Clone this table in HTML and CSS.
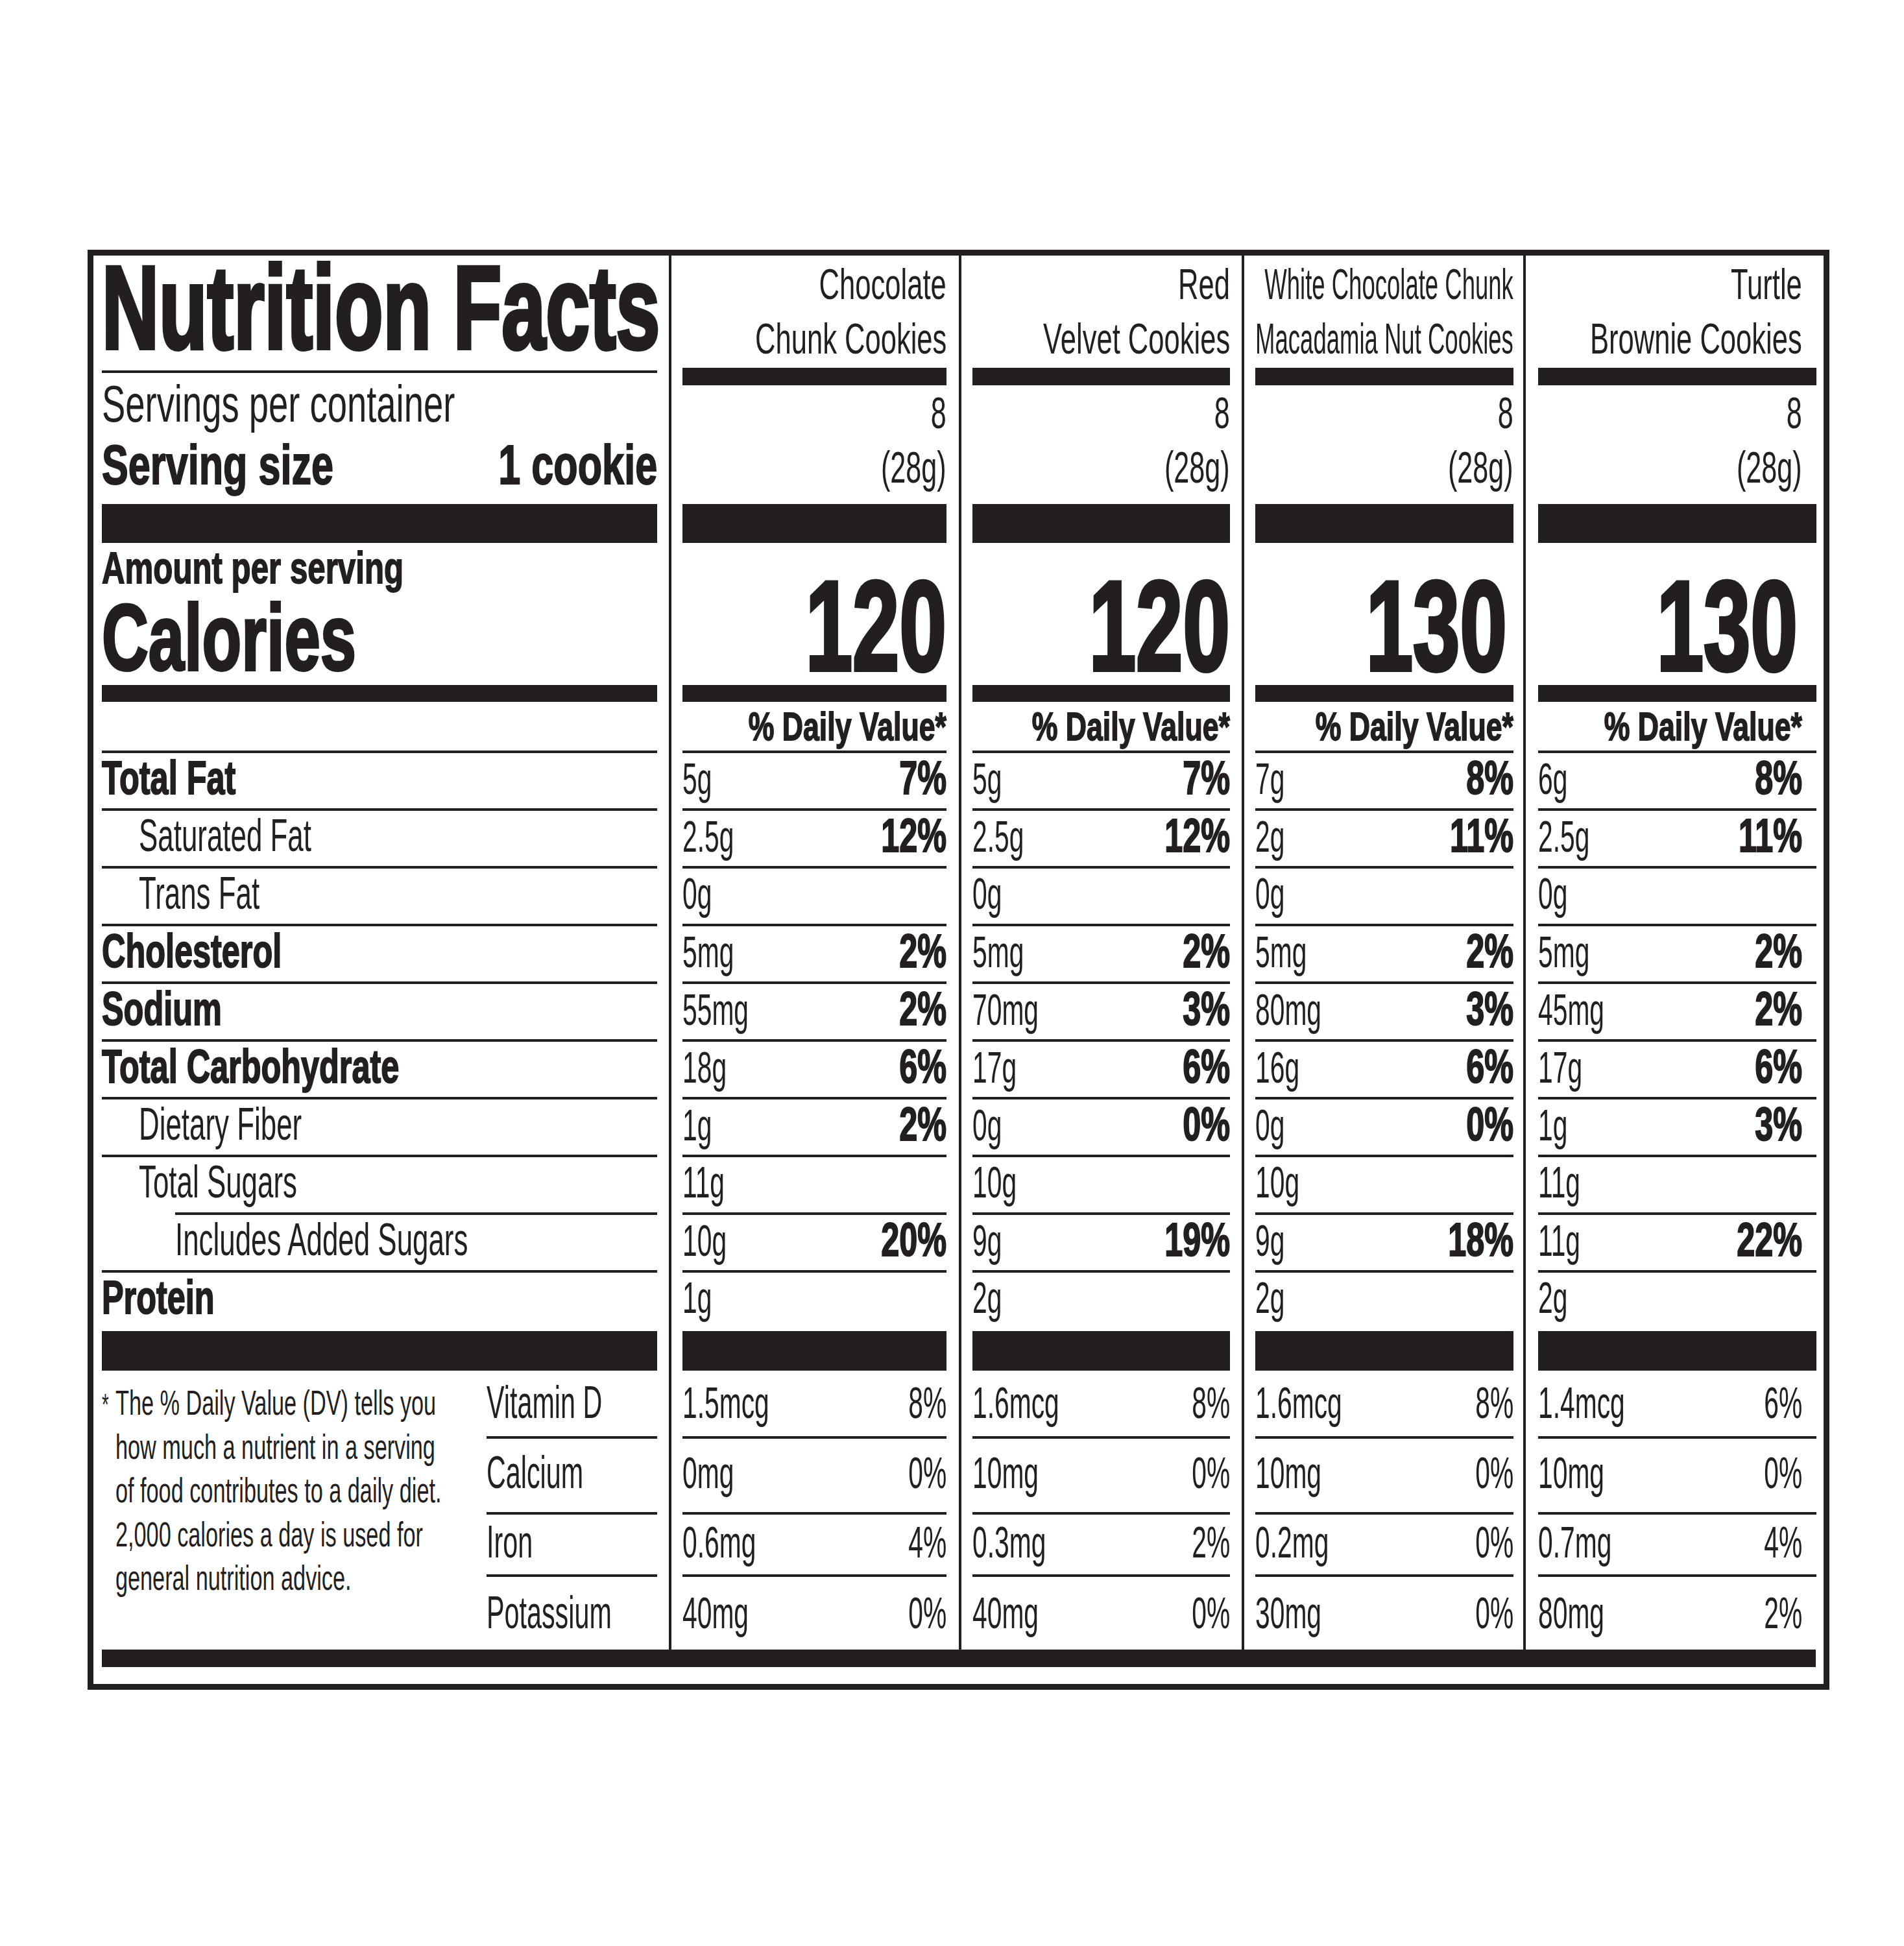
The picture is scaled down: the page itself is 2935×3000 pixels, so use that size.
FILE: index.html
```html
<!DOCTYPE html>
<html lang="en">
<head>
<meta charset="utf-8">
<title>Nutrition Facts</title>
<link rel="stylesheet" href="styles.css">
</head>
<body>
<div class="page">
  <section class="label">
    <div class="cols">
      <div class="col col-nut">
        <div class="title"><span class="sx">Nutrition Facts</span></div>
        <div class="rule"></div>
        <div class="servings"><span class="sx">Servings per container</span></div>
        <div class="serving-size"><span class="sx">Serving size</span><span class="sx r">1 cookie</span></div>
        <div class="bar-thick"></div>
        <div class="amount"><span class="sx">Amount per serving</span></div>
        <div class="calories-label"><span class="sx">Calories</span></div>
        <div class="bar-med"></div>
        <div class="dv"></div>
        <div class="rule"></div>
        <div class="nrow"><span class="sx lb">Total Fat</span></div>
        <div class="rule"></div>
        <div class="nrow ind1"><span class="sx lr">Saturated Fat</span></div>
        <div class="rule"></div>
        <div class="nrow ind1"><span class="sx lr">Trans Fat</span></div>
        <div class="rule"></div>
        <div class="nrow"><span class="sx lb">Cholesterol</span></div>
        <div class="rule"></div>
        <div class="nrow"><span class="sx lb">Sodium</span></div>
        <div class="rule"></div>
        <div class="nrow"><span class="sx lb">Total Carbohydrate</span></div>
        <div class="rule"></div>
        <div class="nrow ind1"><span class="sx lr">Dietary Fiber</span></div>
        <div class="rule"></div>
        <div class="nrow ind1"><span class="sx lr">Total Sugars</span></div>
        <div class="rule rule-ind2"></div>
        <div class="nrow ind2"><span class="sx lr">Includes Added Sugars</span></div>
        <div class="rule"></div>
        <div class="nrow nrow-last"><span class="sx lb">Protein</span></div>
        <div class="bar-thick2"></div>
        <div class="vit-left">
          <p class="footnote"><span class="sx ast">*</span><span class="sx fn">The % Daily Value (DV) tells you<br>how much a nutrient in a serving<br>of food contributes to a daily diet.<br>2,000 calories a day is used for<br>general nutrition advice.</span></p>
          <div class="vit-labels">
            <div class="vrow v1"><span class="sx vl">Vitamin D</span></div>
            <div class="rule"></div>
            <div class="vrow v2"><span class="sx vl">Calcium</span></div>
            <div class="rule"></div>
            <div class="vrow v3"><span class="sx vl">Iron</span></div>
            <div class="rule"></div>
            <div class="vrow v4"><span class="sx vl">Potassium</span></div>
          </div>
        </div>
      </div>

      <div class="col col-prod c1">
        <div class="pname"><span class="sx r">Chocolate</span><span class="sx r">Chunk Cookies</span></div>
        <div class="bar-hd"></div>
        <div class="pserv"><span class="sx r">8</span></div>
        <div class="pserv"><span class="sx r">(28g)</span></div>
        <div class="bar-thick"></div>
        <div class="cal"><span class="sx r">120</span></div>
        <div class="bar-med"></div>
        <div class="dv"><span class="sx r">% Daily Value*</span></div>
        <div class="rule"></div>
        <div class="nrow"><span class="sx val">5g</span><span class="sx r pct">7%</span></div>
        <div class="rule"></div>
        <div class="nrow"><span class="sx val">2.5g</span><span class="sx r pct">12%</span></div>
        <div class="rule"></div>
        <div class="nrow"><span class="sx val">0g</span></div>
        <div class="rule"></div>
        <div class="nrow"><span class="sx val">5mg</span><span class="sx r pct">2%</span></div>
        <div class="rule"></div>
        <div class="nrow"><span class="sx val">55mg</span><span class="sx r pct">2%</span></div>
        <div class="rule"></div>
        <div class="nrow"><span class="sx val">18g</span><span class="sx r pct">6%</span></div>
        <div class="rule"></div>
        <div class="nrow"><span class="sx val">1g</span><span class="sx r pct">2%</span></div>
        <div class="rule"></div>
        <div class="nrow"><span class="sx val">11g</span></div>
        <div class="rule"></div>
        <div class="nrow"><span class="sx val">10g</span><span class="sx r pct">20%</span></div>
        <div class="rule"></div>
        <div class="nrow nrow-last"><span class="sx val">1g</span></div>
        <div class="bar-thick2"></div>
        <div class="vrow v1"><span class="sx vv">1.5mcg</span><span class="sx r vp">8%</span></div>
        <div class="rule"></div>
        <div class="vrow v2"><span class="sx vv">0mg</span><span class="sx r vp">0%</span></div>
        <div class="rule"></div>
        <div class="vrow v3"><span class="sx vv">0.6mg</span><span class="sx r vp">4%</span></div>
        <div class="rule"></div>
        <div class="vrow v4"><span class="sx vv">40mg</span><span class="sx r vp">0%</span></div>
      </div>

      <div class="col col-prod c2">
        <div class="pname"><span class="sx r">Red</span><span class="sx r">Velvet Cookies</span></div>
        <div class="bar-hd"></div>
        <div class="pserv"><span class="sx r">8</span></div>
        <div class="pserv"><span class="sx r">(28g)</span></div>
        <div class="bar-thick"></div>
        <div class="cal"><span class="sx r">120</span></div>
        <div class="bar-med"></div>
        <div class="dv"><span class="sx r">% Daily Value*</span></div>
        <div class="rule"></div>
        <div class="nrow"><span class="sx val">5g</span><span class="sx r pct">7%</span></div>
        <div class="rule"></div>
        <div class="nrow"><span class="sx val">2.5g</span><span class="sx r pct">12%</span></div>
        <div class="rule"></div>
        <div class="nrow"><span class="sx val">0g</span></div>
        <div class="rule"></div>
        <div class="nrow"><span class="sx val">5mg</span><span class="sx r pct">2%</span></div>
        <div class="rule"></div>
        <div class="nrow"><span class="sx val">70mg</span><span class="sx r pct">3%</span></div>
        <div class="rule"></div>
        <div class="nrow"><span class="sx val">17g</span><span class="sx r pct">6%</span></div>
        <div class="rule"></div>
        <div class="nrow"><span class="sx val">0g</span><span class="sx r pct">0%</span></div>
        <div class="rule"></div>
        <div class="nrow"><span class="sx val">10g</span></div>
        <div class="rule"></div>
        <div class="nrow"><span class="sx val">9g</span><span class="sx r pct">19%</span></div>
        <div class="rule"></div>
        <div class="nrow nrow-last"><span class="sx val">2g</span></div>
        <div class="bar-thick2"></div>
        <div class="vrow v1"><span class="sx vv">1.6mcg</span><span class="sx r vp">8%</span></div>
        <div class="rule"></div>
        <div class="vrow v2"><span class="sx vv">10mg</span><span class="sx r vp">0%</span></div>
        <div class="rule"></div>
        <div class="vrow v3"><span class="sx vv">0.3mg</span><span class="sx r vp">2%</span></div>
        <div class="rule"></div>
        <div class="vrow v4"><span class="sx vv">40mg</span><span class="sx r vp">0%</span></div>
      </div>

      <div class="col col-prod c3">
        <div class="pname"><span class="sx r">White Chocolate Chunk</span><span class="sx r">Macadamia Nut Cookies</span></div>
        <div class="bar-hd"></div>
        <div class="pserv"><span class="sx r">8</span></div>
        <div class="pserv"><span class="sx r">(28g)</span></div>
        <div class="bar-thick"></div>
        <div class="cal"><span class="sx r">130</span></div>
        <div class="bar-med"></div>
        <div class="dv"><span class="sx r">% Daily Value*</span></div>
        <div class="rule"></div>
        <div class="nrow"><span class="sx val">7g</span><span class="sx r pct">8%</span></div>
        <div class="rule"></div>
        <div class="nrow"><span class="sx val">2g</span><span class="sx r pct">11%</span></div>
        <div class="rule"></div>
        <div class="nrow"><span class="sx val">0g</span></div>
        <div class="rule"></div>
        <div class="nrow"><span class="sx val">5mg</span><span class="sx r pct">2%</span></div>
        <div class="rule"></div>
        <div class="nrow"><span class="sx val">80mg</span><span class="sx r pct">3%</span></div>
        <div class="rule"></div>
        <div class="nrow"><span class="sx val">16g</span><span class="sx r pct">6%</span></div>
        <div class="rule"></div>
        <div class="nrow"><span class="sx val">0g</span><span class="sx r pct">0%</span></div>
        <div class="rule"></div>
        <div class="nrow"><span class="sx val">10g</span></div>
        <div class="rule"></div>
        <div class="nrow"><span class="sx val">9g</span><span class="sx r pct">18%</span></div>
        <div class="rule"></div>
        <div class="nrow nrow-last"><span class="sx val">2g</span></div>
        <div class="bar-thick2"></div>
        <div class="vrow v1"><span class="sx vv">1.6mcg</span><span class="sx r vp">8%</span></div>
        <div class="rule"></div>
        <div class="vrow v2"><span class="sx vv">10mg</span><span class="sx r vp">0%</span></div>
        <div class="rule"></div>
        <div class="vrow v3"><span class="sx vv">0.2mg</span><span class="sx r vp">0%</span></div>
        <div class="rule"></div>
        <div class="vrow v4"><span class="sx vv">30mg</span><span class="sx r vp">0%</span></div>
      </div>

      <div class="col col-prod c4">
        <div class="pname"><span class="sx r">Turtle</span><span class="sx r">Brownie Cookies</span></div>
        <div class="bar-hd"></div>
        <div class="pserv"><span class="sx r">8</span></div>
        <div class="pserv"><span class="sx r">(28g)</span></div>
        <div class="bar-thick"></div>
        <div class="cal"><span class="sx r">130</span></div>
        <div class="bar-med"></div>
        <div class="dv"><span class="sx r">% Daily Value*</span></div>
        <div class="rule"></div>
        <div class="nrow"><span class="sx val">6g</span><span class="sx r pct">8%</span></div>
        <div class="rule"></div>
        <div class="nrow"><span class="sx val">2.5g</span><span class="sx r pct">11%</span></div>
        <div class="rule"></div>
        <div class="nrow"><span class="sx val">0g</span></div>
        <div class="rule"></div>
        <div class="nrow"><span class="sx val">5mg</span><span class="sx r pct">2%</span></div>
        <div class="rule"></div>
        <div class="nrow"><span class="sx val">45mg</span><span class="sx r pct">2%</span></div>
        <div class="rule"></div>
        <div class="nrow"><span class="sx val">17g</span><span class="sx r pct">6%</span></div>
        <div class="rule"></div>
        <div class="nrow"><span class="sx val">1g</span><span class="sx r pct">3%</span></div>
        <div class="rule"></div>
        <div class="nrow"><span class="sx val">11g</span></div>
        <div class="rule"></div>
        <div class="nrow"><span class="sx val">11g</span><span class="sx r pct">22%</span></div>
        <div class="rule"></div>
        <div class="nrow nrow-last"><span class="sx val">2g</span></div>
        <div class="bar-thick2"></div>
        <div class="vrow v1"><span class="sx vv">1.4mcg</span><span class="sx r vp">6%</span></div>
        <div class="rule"></div>
        <div class="vrow v2"><span class="sx vv">10mg</span><span class="sx r vp">0%</span></div>
        <div class="rule"></div>
        <div class="vrow v3"><span class="sx vv">0.7mg</span><span class="sx r vp">4%</span></div>
        <div class="rule"></div>
        <div class="vrow v4"><span class="sx vv">80mg</span><span class="sx r vp">2%</span></div>
      </div>
    </div>
    <div class="bottom-bar"></div>
  </section>
</div>
</body>
</html>
```

FILE: styles.css
```css
* { box-sizing: border-box; margin: 0; padding: 0; }
html, body { background: #fff; }
body {
  font-family: "Liberation Sans", Arial, Helvetica, sans-serif;
  color: #231f20;
}

.page { padding: 385px 0 0 135px; }

.label {
  width: 2685px;
  border: 9px solid #231f20;
  padding-bottom: 26px;
}

.cols {
  display: grid;
  grid-template-columns: 887px 447px 436px 434px 463px;
}

.col { display: flex; flex-direction: column; }
.col-nut { padding: 0 18px 0 13px; }
.col-prod { border-left: 4px solid #231f20; }
.c1 { padding: 0 19px 0 17px; }
.c2 { padding: 0 18px 0 17px; }
.c3 { padding: 0 15px 0 17px; }
.c4 { padding: 0 11px 0 19px; }

.bottom-bar { height: 27px; background: #231f20; margin: 0 12px 0 13px; }

/* condensed text: glyphs scaled horizontally */
.sx { display: inline-block; white-space: nowrap; transform-origin: 0 50%; }
.sx.r { transform-origin: 100% 50%; }

/* bars and rules */
.rule { height: 4px; background: #231f20; flex: none; }
.rule-ind2 { margin-left: 113px; }
.bar-hd { height: 27px; background: #231f20; flex: none; }
.bar-thick { height: 60px; margin-top: 14px; background: #231f20; flex: none; }
.col-prod .bar-thick { margin-top: 15px; }
.bar-med { height: 26px; margin-top: 2px; background: #231f20; flex: none; }
.col-prod .bar-med { margin-top: 0; }
.bar-thick2 { height: 61px; background: #231f20; flex: none; }

/* left panel */
.title {
  height: 160px; line-height: 160px; margin-bottom: 17px;
  font-size: 182px; font-weight: 700;
}
.title .sx { transform: scaleX(.67); -webkit-text-stroke: 6px #231f20; }

.servings { height: 95px; line-height: 95px; font-size: 80px; }
.servings .sx { transform: scaleX(.68); }

.serving-size {
  height: 93px; line-height: 93px; font-size: 85px; font-weight: 700;
  display: flex; justify-content: space-between; align-items: baseline;
}
.serving-size .sx { transform: scaleX(.72); -webkit-text-stroke: 2px #231f20; }

.amount { height: 77px; line-height: 77px; font-size: 68px; font-weight: 700; }
.amount .sx { transform: scaleX(.724); -webkit-text-stroke: 1.8px #231f20; }

.calories-label { height: 140px; line-height: 140px; font-size: 144px; font-weight: 700; }
.calories-label .sx { transform: scaleX(.69); -webkit-text-stroke: 4px #231f20; }

/* product header */
.pname {
  height: 173px; padding-top: 2px;
  display: flex; flex-direction: column; align-items: flex-end;
  font-size: 67px; line-height: 84px;
}
.pname .sx { transform: scaleX(.65); }
.c3 .pname .sx { transform: scaleX(.545); }

.pserv {
  height: 84px; line-height: 84px; font-size: 68px;
  display: flex; justify-content: flex-end;
}
.pserv .sx { transform: scaleX(.635); }

.cal {
  height: 219px; padding-top: 38px; line-height: 181px;
  font-size: 197px; font-weight: 700;
  display: flex; justify-content: flex-end;
}
.cal .sx { transform: scaleX(.66); -webkit-text-stroke: 6px #231f20; }
.c3 .cal { padding-right: 10px; }
.c4 .cal { padding-right: 29px; }

.dv {
  height: 75px; line-height: 75px; font-size: 62px; font-weight: 700;
  display: flex; justify-content: flex-end;
}
.dv .sx { transform: scaleX(.72); -webkit-text-stroke: 1.8px #231f20; }

/* nutrient rows */
.nrow {
  height: 85px; line-height: 76px; font-size: 70px; flex: none;
  display: flex; justify-content: space-between; align-items: baseline;
}
.nrow-last { height: 90px; }
.ind1 { padding-left: 57px; }
.ind2 { padding-left: 113px; }

.lb { font-size: 72px; font-weight: 700; transform: scaleX(.70); -webkit-text-stroke: 2px #231f20; }
.lr { font-size: 70px; transform: scaleX(.627); }
.val { font-size: 68px; transform: scaleX(.60); }
.pct { font-size: 72px; font-weight: 700; transform: scaleX(.70); -webkit-text-stroke: 2px #231f20; }

/* vitamins and minerals */
.vrow {
  line-height: 68px; font-size: 68px; flex: none;
  display: flex; justify-content: space-between; align-items: baseline;
}
.v1 { height: 101px; padding-top: 15px; }
.v2 { height: 113px; padding-top: 18px; }
.v3 { height: 92px; padding-top: 8px; }
.v4 { height: 112px; padding-top: 21px; }
.vv { transform: scaleX(.60); }
.vp { transform: scaleX(.60); }
.vl { font-size: 70px; transform: scaleX(.59); }

.c4 .pname, .c4 .pserv, .c4 .dv, .c4 .nrow, .c4 .vrow { padding-right: 22px; }

.vit-left {
  display: grid;
  grid-template-columns: 593px 263px;
}
.vit-labels { display: flex; flex-direction: column; }

.footnote {
  display: flex; align-items: baseline;
  padding-top: 16px;
  font-size: 53px; line-height: 67.5px;
}
.ast { width: 21px; flex: none; font-size: 46px; transform: scaleX(.6); }
.fn { transform: scaleX(.646); }
```
